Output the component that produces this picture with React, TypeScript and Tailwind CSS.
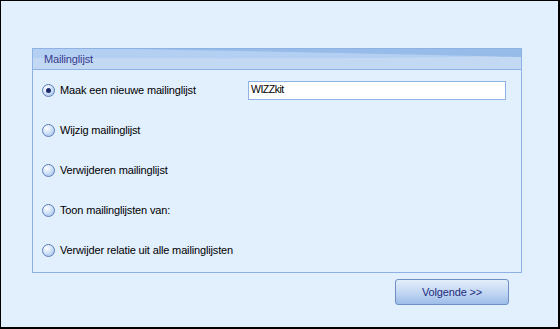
import React from "react";

const options = [
  "Maak een nieuwe mailinglijst",
  "Wijzig mailinglijst",
  "Verwijderen mailinglijst",
  "Toon mailinglijsten van:",
  "Verwijder relatie uit alle mailinglijsten",
];

const Radio = ({ checked }: { checked?: boolean }) => (
  <span className="relative flex h-[13px] w-[13px] shrink-0 items-center justify-center rounded-full border border-[#5b7fb8] bg-[radial-gradient(circle_at_35%_30%,#ffffff_0%,#c9dcf5_55%,#9dbbe6_100%)]">
    {checked && <span className="h-[5px] w-[5px] rounded-full bg-[#1b2a6b]" />}
  </span>
);

export default function App() {
  return (
    <div className="h-[329px] w-[560px] border-l border-t border-b-2 border-r-2 border-black bg-[#e2effd] font-['Liberation_Sans',Arial,sans-serif] text-[11px] tracking-[-0.15px] text-black">
      <div className="ml-[31px] mt-[47px] w-[490px] border border-[#8db2e3]">
        <div className="relative h-[21px] overflow-hidden border-b border-[#8db2e3] bg-[#c3d9f3]">
          <svg className="absolute inset-0" width="488" height="20" viewBox="0 0 488 20" preserveAspectRatio="none">
            <path d="M0 0 H488 V6 C420 9 300 10 0 9 Z" fill="#b3cff1" />
            <path d="M100 0 H488 V8 C430 7 330 4 100 0 Z" fill="#97bce9" />
          </svg>
          <span className="relative ml-[11px] leading-[21px] text-[#34388f]">Mailinglijst</span>
        </div>
        <div className="flex flex-col pl-[9px] pb-[2px]">
          {options.map((o, i) => (
            <div key={o} className="flex h-[40px] items-center">
              <Radio checked={i === 0} />
              <span className={i === 0 ? "ml-[5px] w-[188px] whitespace-nowrap" : "ml-[5px] whitespace-nowrap"}>{o}</span>
              {i === 0 && (
                <div className="flex h-[19px] w-[258px] items-center border border-[#8db2e3] bg-white px-[2px] text-[10.5px] tracking-[-0.5px]">
                  WIZZkit
                </div>
              )}
            </div>
          ))}
        </div>
      </div>
      <div className="ml-[394px] mt-[6px] flex h-[26px] w-[114px] items-center justify-center rounded-[3px] border border-[#6f8fc4] bg-gradient-to-b from-[#e3eefb] via-[#c4d8f3] to-[#9dbde9] text-[#1c2a7a]">
        Volgende &gt;&gt;
      </div>
    </div>
  );
}
